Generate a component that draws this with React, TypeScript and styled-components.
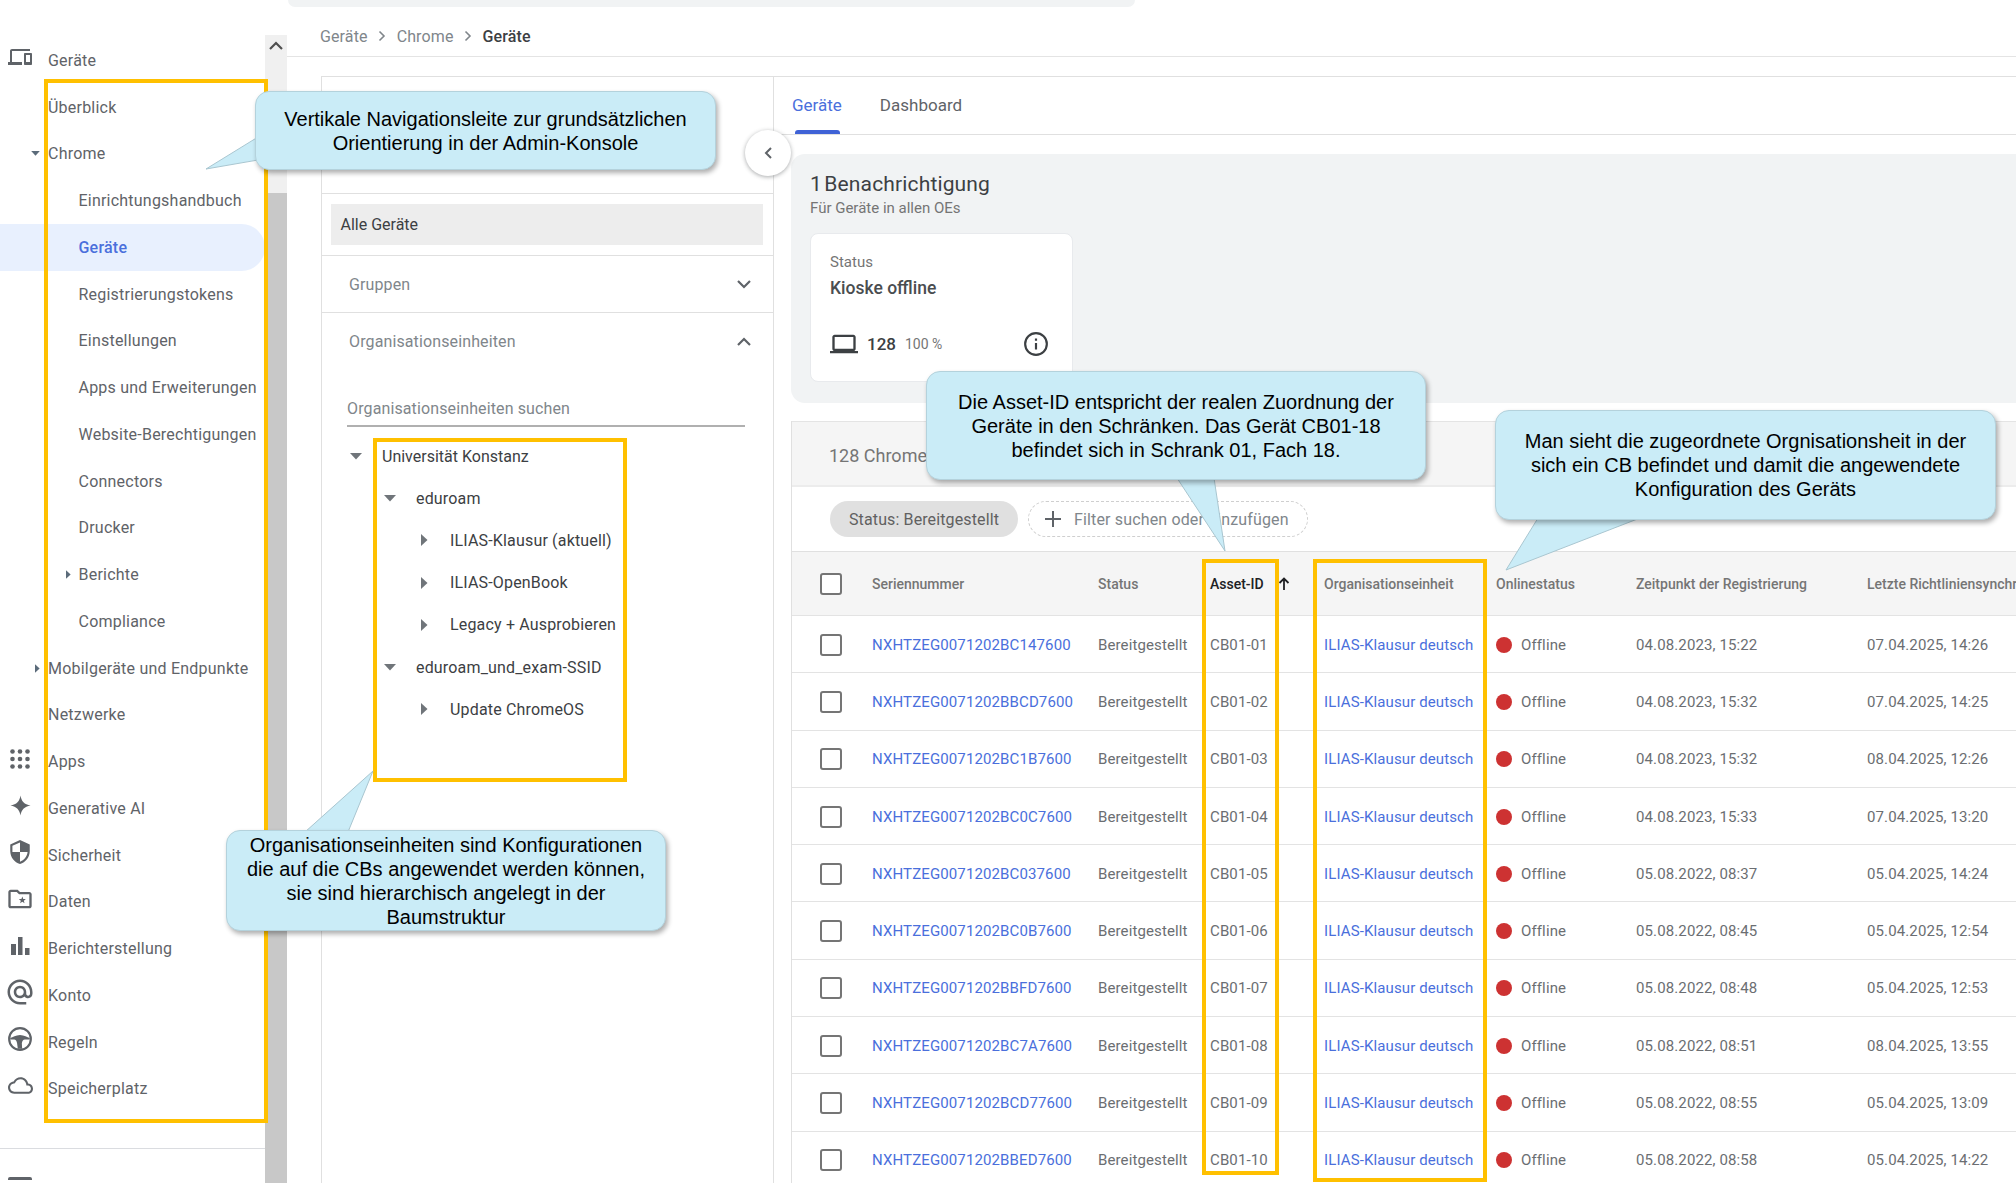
import React from "react";
import styled, { createGlobalStyle } from "styled-components";

const Global = createGlobalStyle`
  html, body { margin: 0; padding: 0; background: #fff; }
  body { font-family: Roboto, "Liberation Sans", sans-serif; color: #5f6368; }
  * { box-sizing: border-box; }
`;

const Page = styled.div`
  position: relative;
  display: flex;
  width: 2016px;
  height: 1183px;
  overflow: hidden;
  background: #fff;
`;

/* ---------- sidebar ---------- */
const Sidebar = styled.aside`
  display: flex;
  flex: 0 0 287px;
  height: 100%;
`;
const NavColumn = styled.nav`
  flex: 0 0 265px;
  padding-top: 37px;
  display: flex;
  flex-direction: column;
`;
const NavRow = styled.div<{ $level?: number; $active?: boolean }>`
  display: flex;
  align-items: center;
  flex: 0 0 46.75px;
  padding-left: ${(p) => (p.$level ? 30.5 : 0)}px;
  font-size: 16px;
  letter-spacing: 0.22px;
  white-space: nowrap;
  color: ${(p) => (p.$active ? "#4a6fdc" : "#5f6368")};
  font-weight: ${(p) => (p.$active ? 500 : 400)};
  background: ${(p) => (p.$active ? "#e8f0fe" : "transparent")};
  border-radius: ${(p) => (p.$active ? "0 24px 24px 0" : "0")};
`;
const NavSlot = styled.span`
  flex: 0 0 48px;
  display: flex;
  align-items: center;
  justify-content: center;
  height: 30px;
  padding: 0 8px 6px 0;
  color: #5f6368;
`;
const CaretSlot = styled.span`
  flex: 0 0 48px;
  display: flex;
  align-items: center;
  justify-content: flex-end;
  padding-right: 8px;
`;
const NavFooter = styled.div`
  margin-top: 36px;
  padding: 28px 8px 0;
  border-top: 1px solid #dadce0;
`;
const FooterIcon = styled.div`
  width: 24px;
  height: 24px;
  border-top: 3px solid #5f6368;
  border-radius: 2px 2px 0 0;
`;
const ScrollBar = styled.div`
  flex: 0 0 22px;
  margin-top: 35px;
  display: flex;
  flex-direction: column;
`;
const ScrollTrack = styled.div`
  flex: 0 0 158px;
  background: #f0f0f0;
  display: flex;
  justify-content: center;
  padding-top: 6px;
`;
const ScrollThumb = styled.div`
  flex: 1;
  background: #c8c8c8;
`;

/* ---------- main ---------- */
const Main = styled.main`
  flex: 1;
  min-width: 0;
  display: flex;
  flex-direction: column;
`;
const TopBar = styled.div`
  flex: 0 0 7px;
  width: 847px;
  margin-left: 1px;
  background: #f1f3f4;
  border-radius: 0 0 8px 8px;
`;
const Breadcrumb = styled.div`
  flex: 0 0 50px;
  display: flex;
  align-items: center;
  gap: 10.5px;
  padding: 9px 0 0 33px;
  font-size: 16px;
  letter-spacing: 0.12px;
  color: #80868b;
  border-bottom: 1px solid #e4e4e4;
`;
const CrumbCurrent = styled.span`
  color: #3c4043;
  font-weight: 500;
`;
const Body = styled.div`
  flex: 1;
  min-height: 0;
  display: flex;
  margin: 19px 0 0 34px;
  position: relative;
`;

/* ---------- left panel ---------- */
const LeftPanel = styled.section`
  flex: 0 0 453px;
  border: 1px solid #e0e0e0;
  border-bottom: 0;
`;
const PanelSpacer = styled.div`
  height: 117px;
  border-bottom: 1px solid #e0e0e0;
`;
const AllSection = styled.div`
  height: 62px;
  padding: 10px 10px 10px 8.5px;
  border-bottom: 1px solid #e0e0e0;
`;
const AllBox = styled.div`
  height: 41px;
  background: #ededed;
  display: flex;
  align-items: center;
  padding-left: 10px;
  font-size: 16px;
  color: #3c4043;
`;
const AccordionHead = styled.div<{ $border?: boolean }>`
  height: 57px;
  display: flex;
  align-items: center;
  justify-content: space-between;
  padding: 0 21px 0 27px;
  font-size: 16px;
  letter-spacing: 0.12px;
  color: #80868b;
  border-bottom: ${(p) => (p.$border ? "1px solid #e0e0e0" : "0")};
`;
const SearchField = styled.div`
  height: 36px;
  margin: 21px 28px 0 25px;
  display: flex;
  align-items: center;
  font-size: 16px;
  letter-spacing: 0.12px;
  color: #80868b;
  border-bottom: 2px solid #b0b0b0;
`;
const Tree = styled.div`
  margin-top: 8px;
  padding-left: 23px;
`;
const TreeRow = styled.div<{ $level: number }>`
  display: flex;
  align-items: center;
  height: 42.2px;
  padding-left: ${(p) => p.$level * 34}px;
  font-size: 16px;
  letter-spacing: ${(p) => (p.$level ? 0.17 : 0)}px;
  color: #3c4043;
  white-space: nowrap;
`;
const TreeCaret = styled.span`
  flex: 0 0 22px;
  margin-right: 15px;
  display: flex;
  justify-content: center;
`;

/* ---------- right ---------- */
const RightPane = styled.section`
  flex: 1;
  min-width: 0;
  padding-left: 17px;
  display: flex;
  flex-direction: column;
`;
const Tabs = styled.div`
  flex: 0 0 59px;
  display: flex;
  gap: 38px;
  border-top: 1px solid #e0e0e0;
  border-bottom: 1px solid #e0e0e0;
  margin-left: -17px;
  padding-left: 18px;
`;
const Tab = styled.div<{ $active?: boolean }>`
  position: relative;
  display: flex;
  align-items: center;
  height: 57px;
  padding-bottom: 1px;
  font-size: 17px;
  color: ${(p) => (p.$active ? "#4a6fdc" : "#5f6368")};
  ${(p) =>
    p.$active &&
    `&::after { content: ""; position: absolute; left: 3px; right: 2px; bottom: 0; height: 4px; background: #3f62d6; border-radius: 3px 3px 0 0; }`}
`;
const CollapseButton = styled.button`
  position: absolute;
  left: 424px;
  top: 54px;
  width: 46px;
  height: 46px;
  border-radius: 50%;
  border: 0;
  background: #fff;
  box-shadow: 0 1px 4px rgba(60, 64, 67, 0.45);
  display: flex;
  align-items: center;
  justify-content: center;
  padding: 0;
`;
const Notice = styled.div`
  flex: 0 0 249px;
  margin-top: 19px;
  padding: 16px 19px;
  background: #f1f3f4;
  border-radius: 14px 0 0 14px;
`;
const NoticeTitle = styled.div`
  font-size: 21px;
  line-height: 28px;
  word-spacing: -3px;
  letter-spacing: 0.15px;
  color: #3c4043;
`;
const NoticeSub = styled.div`
  font-size: 15px;
  line-height: 18px;
  margin-top: 1px;
  color: #757575;
`;
const NoticeCard = styled.div`
  width: 263px;
  height: 149px;
  margin-top: 16px;
  padding: 19px 19px 0;
  background: #fff;
  border: 1px solid #e8eaed;
  border-radius: 8px;
  display: flex;
  flex-direction: column;
`;
const CardLabel = styled.div`
  font-size: 15px;
  line-height: 18px;
  color: #757575;
`;
const CardTitle = styled.div`
  margin-top: 7px;
  font-size: 17.5px;
  line-height: 20px;
  font-weight: 500;
  color: #4a4d50;
`;
const CardStats = styled.div`
  margin-top: 32px;
  display: flex;
  align-items: center;
`;
const StatCount = styled.span`
  margin-left: 9px;
  font-size: 17px;
  font-weight: 500;
  color: #3c4043;
`;
const StatPercent = styled.span`
  margin-left: 9px;
  font-size: 14px;
  color: #757575;
`;
const InfoWrap = styled.span`
  margin-left: auto;
  margin-right: 4px;
  display: flex;
  color: #3c4043;
`;

const TableCard = styled.div`
  flex: 1;
  margin-top: 18px;
  border-left: 1px solid #e0e0e0;
  min-height: 0;
`;
const TableTitle = styled.div`
  height: 66px;
  padding: 4px 0 0 37px;
  display: flex;
  align-items: center;
  background: #f5f5f5;
  font-size: 18px;
  color: #757575;
  border-top: 1px solid #e4e4e4;
  border-bottom: 2px solid #ececec;
`;
const FilterBar = styled.div`
  height: 65px;
  display: flex;
  align-items: center;
  gap: 10px;
  padding-left: 38px;
  border-bottom: 1px solid #e0e0e0;
`;
const FilterChip = styled.div`
  height: 36px;
  width: 188px;
  display: flex;
  align-items: center;
  justify-content: center;
  border-radius: 18px;
  background: #e0e0e0;
  font-size: 16px;
  letter-spacing: 0.12px;
  color: #616161;
`;
const FilterInput = styled.div`
  height: 36px;
  width: 280px;
  display: flex;
  align-items: center;
  gap: 11px;
  padding-left: 14px;
  border: 1.5px dashed #cfcfcf;
  border-radius: 18px;
  font-size: 16px;
  letter-spacing: 0.15px;
  color: #80868b;
`;
const GridRow = styled.div<{ $head?: boolean }>`
  display: grid;
  grid-template-columns: 80px 226px 112px 114px 172px 140px 231px 1fr;
  align-items: center;
  height: ${(p) => (p.$head ? "64px" : "57.3px")};
  padding-top: ${(p) => (p.$head ? 0 : 1)}px;
  background: ${(p) => (p.$head ? "#f5f5f5" : "#fff")};
  font-size: ${(p) => (p.$head ? 14 : 15)}px;
  letter-spacing: ${(p) => (p.$head ? 0 : 0.12)}px;
  font-weight: ${(p) => (p.$head ? 500 : 400)};
  color: ${(p) => (p.$head ? "#757575" : "#6b6e72")};
  border-bottom: 1px solid #e3e3e3;
  white-space: nowrap;
`;
const CheckCell = styled.div`
  padding-left: 28px;
  display: flex;
`;
const CheckBox = styled.span`
  width: 22px;
  height: 22px;
  border: 2px solid #757575;
  border-radius: 3px;
  background: #fff;
`;
const LinkCell = styled.span`
  color: #4a6fdc;
`;
const SortCell = styled.div`
  display: flex;
  align-items: center;
  gap: 14px;
  color: #202124;
`;
const StatusCell = styled.div`
  display: flex;
  align-items: center;
  gap: 9px;
`;
const RedDot = styled.span`
  width: 16px;
  height: 16px;
  border-radius: 50%;
  background: #cd3232;
`;

/* ---------- annotations ---------- */
const Highlight = styled.div<{ $l: number; $t: number; $w: number; $h: number }>`
  position: absolute;
  left: ${(p) => p.$l}px;
  top: ${(p) => p.$t}px;
  width: ${(p) => p.$w}px;
  height: ${(p) => p.$h}px;
  border: 4px solid #ffc000;
  pointer-events: none;
`;
const TailLayer = styled.svg`
  position: absolute;
  inset: 0;
  width: 2016px;
  height: 1183px;
  pointer-events: none;
`;
const Callout = styled.div<{ $l: number; $t: number; $w: number; $h: number }>`
  position: absolute;
  left: ${(p) => p.$l}px;
  top: ${(p) => p.$t}px;
  width: ${(p) => p.$w}px;
  height: ${(p) => p.$h}px;
  display: flex;
  align-items: center;
  justify-content: center;
  text-align: center;
  font-family: "Liberation Sans", Arial, sans-serif;
  font-size: 20px;
  line-height: 24px;
  color: #000;
  background: #caecf7;
  border: 1px solid #b4d2dc;
  border-radius: 14px;
  box-shadow: 2px 3px 5px rgba(0, 0, 0, 0.32);
`;

/* ---------- icons ---------- */
const Ico = ({ d, size = 24, extra }: { d: string; size?: number; extra?: React.ReactNode }) => (
  <svg width={size} height={size} viewBox="0 0 24 24" fill="currentColor" aria-hidden>
    <path d={d} />
    {extra}
  </svg>
);
const CaretDown = ({ small }: { small?: boolean }) => (
  <svg width={small ? 9 : 12} height={small ? 5 : 7} viewBox="0 0 12 7" aria-hidden>
    <path d="M0 0h12L6 6.500z" fill={small ? "#5b6b7a" : "#70757a"} />
  </svg>
);
const CaretRight = ({ small }: { small?: boolean }) => (
  <svg width={small ? 5 : 7} height={small ? 9 : 12} viewBox="0 0 7 12" aria-hidden>
    <path d="M0 0v12l6.500-6z" fill={small ? "#5b6b7a" : "#70757a"} />
  </svg>
);
const Chevron = ({ dir, color = "#5f6368" }: { dir: "up" | "down"; color?: string }) => (
  <svg width="16" height="10" viewBox="0 0 16 10" aria-hidden>
    <path
      d={dir === "up" ? "M2 8l6-6 6 6" : "M2 2l6 6 6-6"}
      fill="none"
      stroke={color}
      strokeWidth="2.200"
    />
  </svg>
);
const CrumbSep = () => (
  <svg width="8" height="12" viewBox="0 0 8 12" aria-hidden>
    <path d="M1.500 1.500L6 6l-4.500 4.500" fill="none" stroke="#80868b" strokeWidth="1.600" />
  </svg>
);

const icons: Record<string, React.ReactNode> = {
  devices: (
    <Ico d="M4 6h18V4H4c-1.100 0-2 .9-2 2v11H0v3h14v-3H4V6zm19 2h-6c-.55 0-1 .45-1 1v10c0 .55.45 1 1 1h6c.55 0 1-.45 1-1V9c0-.55-.45-1-1-1zm-1 9h-4v-7h4v7z" />
  ),
  apps: (
    <svg width="24" height="24" viewBox="0 0 24 24" fill="currentColor" aria-hidden>
      {[4.5, 12, 19.5].map((y) =>
        [4.5, 12, 19.5].map((x) => <circle key={`${x}-${y}`} cx={x} cy={y} r="2.300" />)
      )}
    </svg>
  ),
  spark: (
    <Ico
      size={23}
      d="M12 1.500c.9 6 3.900 9.300 10.500 10.500-6.600 1.200-9.600 4.500-10.500 10.500-.9-6-3.900-9.300-10.500-10.500C8.100 10.800 11.100 7.500 12 1.500z"
    />
  ),
  shield: (
    <Ico
      size={26}
      d="M12 1L3 5v6c0 5.550 3.840 10.740 9 12 5.160-1.260 9-6.450 9-12V5l-9-4zm0 10.990h7c-.53 4.120-3.280 7.790-7 8.940V12H5V6.300l7-3.110v8.800z"
    />
  ),
  folder: (
    <Ico
      size={28}
      d="M20 6h-8l-2-2H4c-1.100 0-1.990.9-1.990 2L2 18c0 1.100.9 2 2 2h16c1.100 0 2-.9 2-2V8c0-1.100-.9-2-2-2zm0 12H4V6h5.170l2 2H20v10z"
      extra={<path d="M14 9.800l.8 2.100 2.200.1-1.700 1.400.6 2.200-1.900-1.200-1.900 1.200.6-2.200-1.700-1.400 2.200-.1z" />}
    />
  ),
  bars: <Ico d="M3 10h5v11H3zM10 3h4.500v18H10zM17 14h4.500v7H17z" />,
  at: (
    <Ico
      size={30}
      d="M12 2C6.480 2 2 6.480 2 12s4.480 10 10 10h5v-2h-5c-4.340 0-8-3.660-8-8s3.660-8 8-8 8 3.660 8 8v1.430c0 .79-.71 1.570-1.500 1.570s-1.500-.78-1.500-1.570V12c0-2.760-2.240-5-5-5s-5 2.240-5 5 2.240 5 5 5c1.380 0 2.640-.56 3.540-1.470.65.89 1.770 1.470 2.960 1.470 1.970 0 3.500-1.600 3.500-3.570V12c0-5.520-4.480-10-10-10zm0 13c-1.660 0-3-1.340-3-3s1.340-3 3-3 3 1.340 3 3-1.340 3-3 3z"
    />
  ),
  wheel: (
    <svg width="26" height="26" viewBox="0 0 24 24" fill="currentColor" aria-hidden>
      <circle cx="12" cy="12" r="10" fill="none" stroke="currentColor" strokeWidth="2" />
      <path d="M3 11c2.500-.6 5-2.800 9-2.800s6.500 2.200 9 2.800v1.500h-4.500c-1.500 0-2.500 1.500-2.800 3.500L14 21h-4l-.7-5c-.3-2-1.300-3.500-2.800-3.500H3z" />
    </svg>
  ),
  cloud: (
    <Ico
      size={25}
      d="M19.350 10.040C18.670 6.590 15.640 4 12 4 9.110 4 6.600 5.640 5.350 8.040 2.340 8.360 0 10.910 0 14c0 3.310 2.690 6 6 6h13c2.760 0 5-2.240 5-5 0-2.640-2.050-4.780-4.650-4.960zM19 18H6c-2.210 0-4-1.790-4-4 0-2.050 1.530-3.760 3.560-3.970l1.070-.11.5-.95C8.080 7.140 9.940 6 12 6c2.620 0 4.880 1.860 5.390 4.430l.3 1.500 1.530.11c1.560.1 2.780 1.410 2.780 2.960 0 1.650-1.350 3-3 3z"
    />
  ),
};

type NavItem = { label: string; level?: number; icon?: string; caret?: "down" | "right"; active?: boolean };
const navItems: NavItem[] = [
  { label: "Geräte", icon: "devices" },
  { label: "Überblick" },
  { label: "Chrome", caret: "down" },
  { label: "Einrichtungshandbuch", level: 1 },
  { label: "Geräte", level: 1, active: true },
  { label: "Registrierungstokens", level: 1 },
  { label: "Einstellungen", level: 1 },
  { label: "Apps und Erweiterungen", level: 1 },
  { label: "Website-Berechtigungen", level: 1 },
  { label: "Connectors", level: 1 },
  { label: "Drucker", level: 1 },
  { label: "Berichte", level: 1, caret: "right" },
  { label: "Compliance", level: 1 },
  { label: "Mobilgeräte und Endpunkte", caret: "right" },
  { label: "Netzwerke" },
  { label: "Apps", icon: "apps" },
  { label: "Generative AI", icon: "spark" },
  { label: "Sicherheit", icon: "shield" },
  { label: "Daten", icon: "folder" },
  { label: "Berichterstellung", icon: "bars" },
  { label: "Konto", icon: "at" },
  { label: "Regeln", icon: "wheel" },
  { label: "Speicherplatz", icon: "cloud" },
];

const treeItems: { label: string; level: number; open: boolean }[] = [
  { label: "Universität Konstanz", level: 0, open: true },
  { label: "eduroam", level: 1, open: true },
  { label: "ILIAS-Klausur (aktuell)", level: 2, open: false },
  { label: "ILIAS-OpenBook", level: 2, open: false },
  { label: "Legacy + Ausprobieren", level: 2, open: false },
  { label: "eduroam_und_exam-SSID", level: 1, open: true },
  { label: "Update ChromeOS", level: 2, open: false },
];

const rows = [
  ["BC147600", "04.08.2023, 15:22", "07.04.2025, 14:26"],
  ["BBCD7600", "04.08.2023, 15:32", "07.04.2025, 14:25"],
  ["BC1B7600", "04.08.2023, 15:32", "08.04.2025, 12:26"],
  ["BC0C7600", "04.08.2023, 15:33", "07.04.2025, 13:20"],
  ["BC037600", "05.08.2022, 08:37", "05.04.2025, 14:24"],
  ["BC0B7600", "05.08.2022, 08:45", "05.04.2025, 12:54"],
  ["BBFD7600", "05.08.2022, 08:48", "05.04.2025, 12:53"],
  ["BC7A7600", "05.08.2022, 08:51", "08.04.2025, 13:55"],
  ["BCD77600", "05.08.2022, 08:55", "05.04.2025, 13:09"],
  ["BBED7600", "05.08.2022, 08:58", "05.04.2025, 14:22"],
];

const tails = [
  "206,169 258,137 258,160",
  "1225,551 1177,478 1214,478",
  "373,771 305,832 348,832",
  "1506,570 1538,518 1640,518",
];

export default function App() {
  return (
    <Page>
      <Global />
      <Sidebar>
        <NavColumn>
          {navItems.map((n, i) => (
            <NavRow key={i} $level={n.level} $active={n.active}>
              {n.caret ? (
                <CaretSlot>{n.caret === "down" ? <CaretDown small /> : <CaretRight small />}</CaretSlot>
              ) : (
                <NavSlot>{n.icon ? icons[n.icon] : null}</NavSlot>
              )}
              {n.label}
            </NavRow>
          ))}
          <NavFooter>
            <FooterIcon />
          </NavFooter>
        </NavColumn>
        <ScrollBar>
          <ScrollTrack>
            <Chevron dir="up" color="#505050" />
          </ScrollTrack>
          <ScrollThumb />
        </ScrollBar>
      </Sidebar>

      <Main>
        <TopBar />
        <Breadcrumb>
          <span>Geräte</span>
          <CrumbSep />
          <span>Chrome</span>
          <CrumbSep />
          <CrumbCurrent>Geräte</CrumbCurrent>
        </Breadcrumb>
        <Body>
          <LeftPanel>
            <PanelSpacer />
            <AllSection>
              <AllBox>Alle Geräte</AllBox>
            </AllSection>
            <AccordionHead $border>
              Gruppen
              <Chevron dir="down" />
            </AccordionHead>
            <AccordionHead>
              Organisationseinheiten
              <Chevron dir="up" />
            </AccordionHead>
            <SearchField>Organisationseinheiten suchen</SearchField>
            <Tree>
              {treeItems.map((t) => (
                <TreeRow key={t.label} $level={t.level}>
                  <TreeCaret>{t.open ? <CaretDown /> : <CaretRight />}</TreeCaret>
                  {t.label}
                </TreeRow>
              ))}
            </Tree>
          </LeftPanel>

          <RightPane>
            <Tabs>
              <Tab $active>Geräte</Tab>
              <Tab>Dashboard</Tab>
            </Tabs>
            <Notice>
              <NoticeTitle>1 Benachrichtigung</NoticeTitle>
              <NoticeSub>Für Geräte in allen OEs</NoticeSub>
              <NoticeCard>
                <CardLabel>Status</CardLabel>
                <CardTitle>Kioske offline</CardTitle>
                <CardStats>
                  <svg width="28" height="28" viewBox="0 0 24 24" fill="#3c4043" aria-hidden>
                    <path d="M20 18c1.100 0 1.990-.9 1.990-2L22 6c0-1.100-.9-2-2-2H4c-1.100 0-2 .9-2 2v10c0 1.100.9 2 2 2H0v2h24v-2h-4zM4 6h16v10H4V6z" />
                  </svg>
                  <StatCount>128</StatCount>
                  <StatPercent>100 %</StatPercent>
                  <InfoWrap>
                    <svg width="26" height="26" viewBox="0 0 24 24" fill="none" aria-hidden>
                      <circle cx="12" cy="12" r="10" stroke="currentColor" strokeWidth="2" />
                      <path d="M12 11v6M12 7v2" stroke="currentColor" strokeWidth="2" />
                    </svg>
                  </InfoWrap>
                </CardStats>
              </NoticeCard>
            </Notice>

            <TableCard>
              <TableTitle>128 Chrome-Geräte</TableTitle>
              <FilterBar>
                <FilterChip>Status: Bereitgestellt</FilterChip>
                <FilterInput>
                  <svg width="20" height="20" viewBox="0 0 20 20" aria-hidden>
                    <path d="M10 2v16M2 10h16" stroke="#5f6368" strokeWidth="2" />
                  </svg>
                  Filter suchen oder hinzufügen
                </FilterInput>
              </FilterBar>
              <GridRow $head>
                <CheckCell>
                  <CheckBox />
                </CheckCell>
                <span>Seriennummer</span>
                <span>Status</span>
                <SortCell>
                  Asset-ID
                  <svg width="12" height="14" viewBox="0 0 12 14" aria-hidden>
                    <path d="M6 13V2M1.500 6L6 1.500 10.500 6" fill="none" stroke="#202124" strokeWidth="1.800" />
                  </svg>
                </SortCell>
                <span>Organisationseinheit</span>
                <span>Onlinestatus</span>
                <span>Zeitpunkt der Registrierung</span>
                <span>Letzte Richtliniensynchronisierung</span>
              </GridRow>
              {rows.map((r, i) => (
                <GridRow key={r[0]}>
                  <CheckCell>
                    <CheckBox />
                  </CheckCell>
                  <LinkCell>{`NXHTZEG0071202${r[0]}`}</LinkCell>
                  <span>Bereitgestellt</span>
                  <span>{`CB01-${String(i + 1).padStart(2, "0")}`}</span>
                  <LinkCell>ILIAS-Klausur deutsch</LinkCell>
                  <StatusCell>
                    <RedDot />
                    Offline
                  </StatusCell>
                  <span>{r[1]}</span>
                  <span>{r[2]}</span>
                </GridRow>
              ))}
            </TableCard>
          </RightPane>
          <CollapseButton aria-label="Einklappen">
            <svg width="10" height="14" viewBox="0 0 10 14" aria-hidden>
              <path d="M8 2L3 7l5 5" fill="none" stroke="#5f6368" strokeWidth="2" />
            </svg>
          </CollapseButton>
        </Body>
      </Main>

      <Highlight $l={44} $t={79} $w={224} $h={1044} />
      <Highlight $l={373} $t={438} $w={254} $h={344} />
      <Highlight $l={1202} $t={559} $w={77} $h={616} />
      <Highlight $l={1313} $t={559} $w={174} $h={623} />

      <TailLayer viewBox="0 0 2016 1183" aria-hidden>
        {tails.map((p) => (
          <polygon key={p} points={p} fill="#caecf7" stroke="#a9c6d0" strokeWidth="1" />
        ))}
      </TailLayer>

      <Callout $l={255} $t={91} $w={461} $h={79}>
        <span>
          Vertikale Navigationsleite zur grundsätzlichen
          <br />
          Orientierung in der Admin-Konsole
        </span>
      </Callout>
      <Callout $l={926} $t={371} $w={500} $h={109}>
        <span>
          Die Asset-ID entspricht der realen Zuordnung der
          <br />
          Geräte in den Schränken. Das Gerät CB01-18
          <br />
          befindet sich in Schrank 01, Fach 18.
        </span>
      </Callout>
      <Callout $l={226} $t={830} $w={440} $h={101}>
        <span>
          Organisationseinheiten sind Konfigurationen
          <br />
          die auf die CBs angewendet werden können,
          <br />
          sie sind hierarchisch angelegt in der
          <br />
          Baumstruktur
        </span>
      </Callout>
      <Callout $l={1495} $t={410} $w={501} $h={110}>
        <span>
          Man sieht die zugeordnete Orgnisationsheit in der
          <br />
          sich ein CB befindet und damit die angewendete
          <br />
          Konfiguration des Geräts
        </span>
      </Callout>
    </Page>
  );
}
